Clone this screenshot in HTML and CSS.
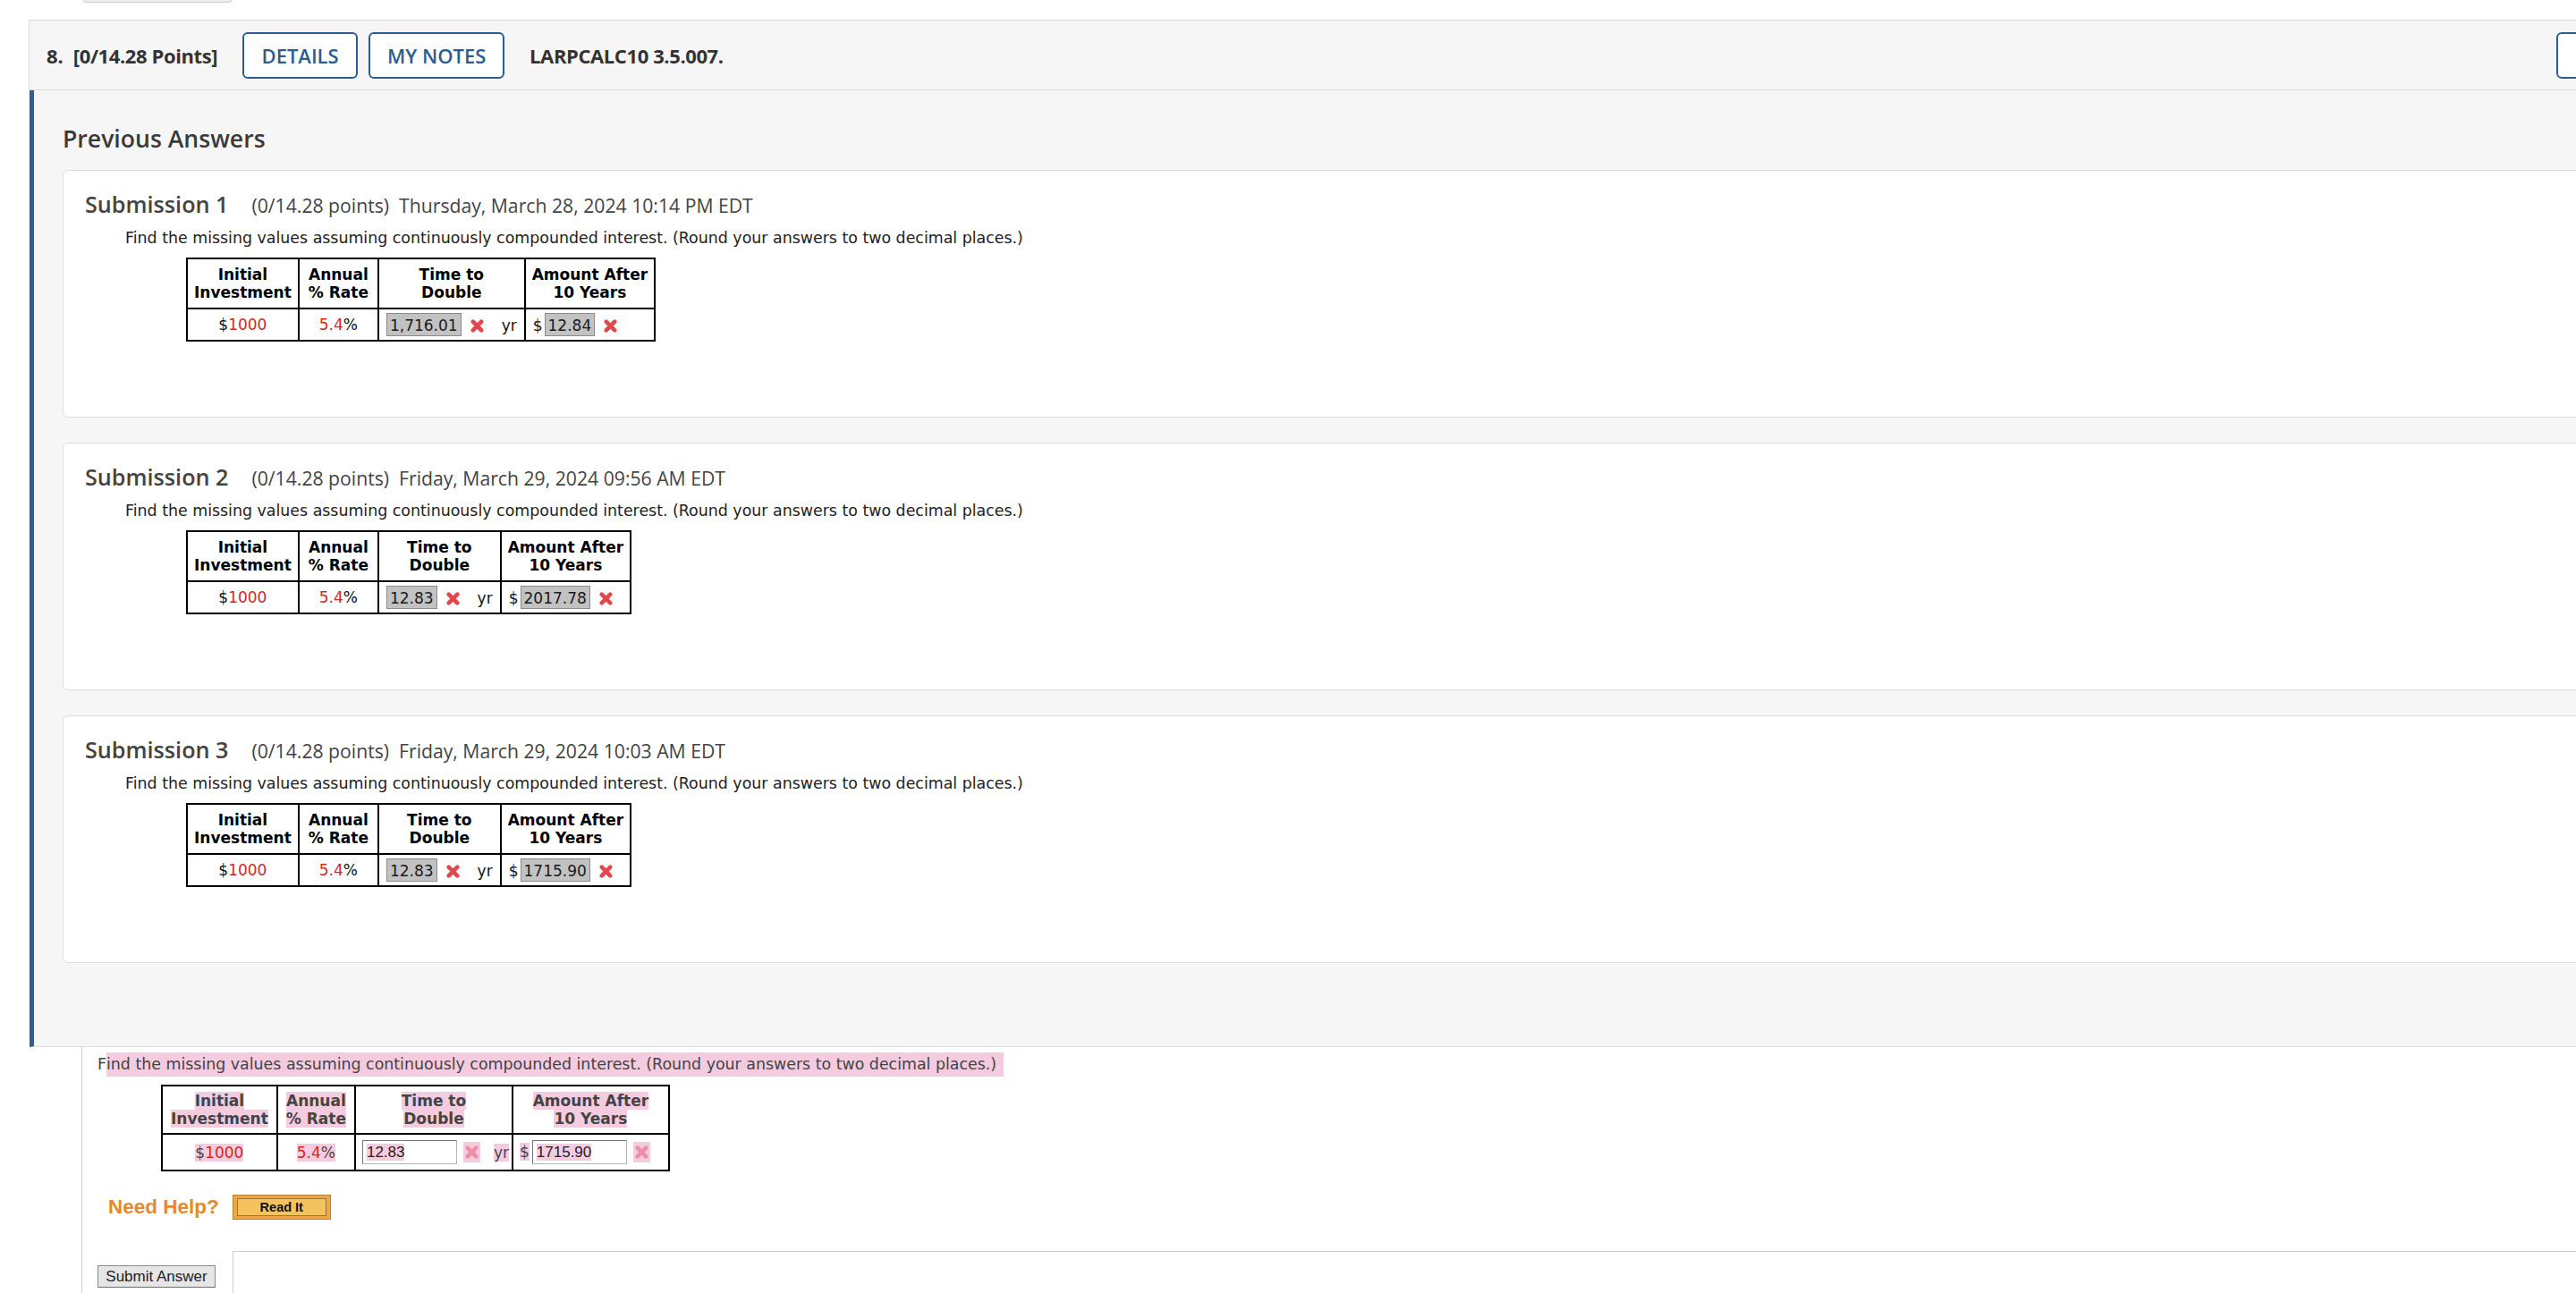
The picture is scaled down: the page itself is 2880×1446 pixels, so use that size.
FILE: index.html
```html
<!DOCTYPE html>
<html>
<head>
<meta charset="utf-8">
<title>Question 8</title>
<link rel="stylesheet" href="styles.css">
</head>
<body>
<div class="stub"></div>
<div class="question">
  <div class="qhead">
    <span class="qnum">8.</span>
    <span class="qpts">[0/14.28 Points]</span>
    <button class="qbtn qbtn-details">DETAILS</button>
    <button class="qbtn qbtn-notes">MY NOTES</button>
    <span class="qcode">LARPCALC10 3.5.007.</span>
    <button class="qbtn qbtn-right"></button>
  </div>

  <div class="prev">
    <h2 class="prev-title">Previous Answers</h2>

    <div class="card">
      <div class="sub-head"><span class="sub-name">Submission 1</span><span class="sub-pts">(0/14.28 points)</span><span class="sub-date">Thursday, March 28, 2024 10:14 PM EDT</span></div>
      <div class="qtext">Find the missing values assuming continuously compounded interest. (Round your answers to two decimal places.)</div>
      <table class="qtable">
        <tr>
          <th>Initial<br>Investment</th>
          <th class="rate">Annual<br>% Rate</th>
          <th>Time to<br>Double</th>
          <th>Amount After<br>10 Years</th>
        </tr>
        <tr>
          <td class="c">$<span class="red">1000</span></td>
          <td class="c"><span class="red">5.4</span>%</td>
          <td class="l"><span class="ans">1,716.01</span><svg class="xmark" viewBox="0 0 16 16"><path d="M3.5 3.5 L12.5 12.5 M12.5 3.5 L3.5 12.5"/></svg><span class="unit">yr</span></td>
          <td class="l">$<span class="ans ans-d">12.84</span><svg class="xmark" viewBox="0 0 16 16"><path d="M3.5 3.5 L12.5 12.5 M12.5 3.5 L3.5 12.5"/></svg></td>
        </tr>
      </table>
    </div>

    <div class="card">
      <div class="sub-head"><span class="sub-name">Submission 2</span><span class="sub-pts">(0/14.28 points)</span><span class="sub-date">Friday, March 29, 2024 09:56 AM EDT</span></div>
      <div class="qtext">Find the missing values assuming continuously compounded interest. (Round your answers to two decimal places.)</div>
      <table class="qtable">
        <tr>
          <th>Initial<br>Investment</th>
          <th class="rate">Annual<br>% Rate</th>
          <th>Time to<br>Double</th>
          <th>Amount After<br>10 Years</th>
        </tr>
        <tr>
          <td class="c">$<span class="red">1000</span></td>
          <td class="c"><span class="red">5.4</span>%</td>
          <td class="l"><span class="ans">12.83</span><svg class="xmark" viewBox="0 0 16 16"><path d="M3.5 3.5 L12.5 12.5 M12.5 3.5 L3.5 12.5"/></svg><span class="unit">yr</span></td>
          <td class="l">$<span class="ans ans-d">2017.78</span><svg class="xmark" viewBox="0 0 16 16"><path d="M3.5 3.5 L12.5 12.5 M12.5 3.5 L3.5 12.5"/></svg></td>
        </tr>
      </table>
    </div>

    <div class="card">
      <div class="sub-head"><span class="sub-name">Submission 3</span><span class="sub-pts">(0/14.28 points)</span><span class="sub-date">Friday, March 29, 2024 10:03 AM EDT</span></div>
      <div class="qtext">Find the missing values assuming continuously compounded interest. (Round your answers to two decimal places.)</div>
      <table class="qtable">
        <tr>
          <th>Initial<br>Investment</th>
          <th class="rate">Annual<br>% Rate</th>
          <th>Time to<br>Double</th>
          <th>Amount After<br>10 Years</th>
        </tr>
        <tr>
          <td class="c">$<span class="red">1000</span></td>
          <td class="c"><span class="red">5.4</span>%</td>
          <td class="l"><span class="ans">12.83</span><svg class="xmark" viewBox="0 0 16 16"><path d="M3.5 3.5 L12.5 12.5 M12.5 3.5 L3.5 12.5"/></svg><span class="unit">yr</span></td>
          <td class="l">$<span class="ans ans-d">1715.90</span><svg class="xmark" viewBox="0 0 16 16"><path d="M3.5 3.5 L12.5 12.5 M12.5 3.5 L3.5 12.5"/></svg></td>
        </tr>
      </table>
    </div>
  </div>

  <div class="current">
    <div class="qtext qtext-cur">F<span class="sel sel-line">ind the missing values assuming continuously compounded interest. (Round your answers to two decimal places.)</span></div>
    <table class="qtable cur-table">
      <tr>
        <th><span class="sel">Initial</span><br><span class="sel">Investment</span></th>
        <th><span class="sel">Annual</span><br><span class="sel">% Rate</span></th>
        <th><span class="sel">Time to</span><br><span class="sel">Double</span></th>
        <th><span class="sel">Amount After</span><br><span class="sel">10 Years</span></th>
      </tr>
      <tr>
        <td class="c"><span class="sel">$<span class="red">1000</span></span></td>
        <td class="c"><span class="sel"><span class="red">5.4</span>%</span></td>
        <td class="l cur-c3"><span class="inp"><span class="sel">12.83</span></span><span class="sel xwrap"><svg class="xmark xfaded" viewBox="0 0 16 16"><path d="M3.5 3.5 L12.5 12.5 M12.5 3.5 L3.5 12.5"/></svg></span><span class="sel unit-cur">yr</span></td>
        <td class="l cur-c4"><span class="sel">$</span><span class="inp inp-d"><span class="sel">1715.90</span></span><span class="sel xwrap"><svg class="xmark xfaded" viewBox="0 0 16 16"><path d="M3.5 3.5 L12.5 12.5 M12.5 3.5 L3.5 12.5"/></svg></span></td>
      </tr>
    </table>

    <div class="help-row">
      <span class="need-help">Need Help?</span>
      <span class="read-it"><span class="read-it-inner">Read It</span></span>
    </div>

    <div class="submit-row">
      <button class="submit-btn">Submit Answer</button>
      <div class="submit-box"></div>
    </div>
  </div>
</div>
</body>
</html>
```

FILE: styles.css
```css
html, body {
  margin: 0;
  padding: 0;
  overflow: hidden;
  background: #ffffff;
}

body {
  width: 2880px;
  height: 1446px;
  font-family: "Open Sans", sans-serif;
  color: #333333;
}

.stub {
  margin-left: 93px;
  width: 164px;
  height: 2px;
  background: #ececec;
  border: 1px solid #cfcfcf;
  border-top: none;
  border-radius: 0 0 4px 4px;
}

.question {
  margin-left: 32px;
  margin-top: 19px;
  width: 2980px;
}

/* header bar */
.qhead {
  display: flex;
  align-items: center;
  height: 77px;
  background: #f6f6f6;
  border: 1px solid #dcdcdc;
  padding: 0 23px 0 19px;
  font-size: 22px;
  font-weight: 700;
  color: #333333;
  white-space: nowrap;
}

.qnum {
  font-weight: 700;
}

.qpts {
  margin-left: 11px;
  font-weight: 700;
  letter-spacing: -0.4px;
}

.qbtn {
  font-family: "Open Sans", sans-serif;
  font-size: 22px;
  font-weight: 600;
  color: #2a5d94;
  background: #ffffff;
  border: 2px solid #2a5d94;
  border-radius: 6px;
  height: 52px;
  padding: 0;
  margin: 0;
  white-space: nowrap;
  text-align: center;
}

.qbtn-details {
  margin-left: 28px;
  width: 129px;
}

.qbtn-notes {
  margin-left: 12px;
  width: 152px;
}

.qcode {
  margin-left: 28px;
  font-weight: 700;
  letter-spacing: -0.4px;
}

.qbtn-right {
  margin-left: auto;
  width: 130px;
}

/* previous answers panel */
.prev {
  margin-left: 1px;
  background: #f6f6f6;
  border-left: 5px solid #2b5f97;
  border-bottom: 1px solid #dcdcdc;
  padding: 36px 0 93px 32px;
}

.prev-title {
  margin: 0 0 17px 0;
  font-size: 26.6px;
  font-weight: 600;
  color: #3a3a3a;
  line-height: normal;
}

.card {
  background: #ffffff;
  border: 1px solid #dedede;
  border-radius: 6px;
  padding: 20px 0 84px 24px;
  margin-bottom: 28px;
}

.card:last-child {
  margin-bottom: 0;
}

.sub-head {
  line-height: normal;
  color: #444444;
  white-space: nowrap;
}

.sub-name {
  font-size: 25.2px;
  font-weight: 600;
  color: #444444;
}

.sub-pts {
  margin-left: 26px;
  font-size: 21.2px;
}

.sub-date {
  margin-left: 11px;
  font-size: 21.2px;
}

.qtext {
  font-family: "DejaVu Sans", Verdana, sans-serif;
  font-size: 17.4px;
  line-height: 20px;
  color: #222222;
  margin: 11px 0 12px 45px;
  white-space: nowrap;
}

/* data tables */
.qtable {
  border-collapse: collapse;
  margin-left: 113px;
  font-family: "DejaVu Sans", Verdana, sans-serif;
  font-size: 17px;
  line-height: 20px;
  color: #111111;
}

.qtable th,
.qtable td {
  border: 2px solid #000000;
  white-space: nowrap;
}

.qtable th {
  font-weight: bold;
  text-align: center;
  padding: 7px 7px;
  color: #000000;
}

.qtable th.rate {
  padding-left: 10px;
  padding-right: 10px;
}

.qtable td {
  padding: 4px 8px;
}

.qtable td.c {
  text-align: center;
}

.qtable td.l {
  text-align: left;
}

.red {
  color: #d2281e;
}

.ans {
  display: inline-block;
  background: #c2c2c2;
  border: 1px solid #8a8a8a;
  padding: 3px 3px 1px 3px;
  line-height: 20px;
  color: #1a1a1a;
}

.ans-d {
  margin-left: 2px;
}

.xmark {
  display: inline-block;
  vertical-align: -3px;
  width: 17px;
  height: 17px;
  margin-left: 9px;
  fill: none;
  stroke: #e2474b;
  stroke-width: 4.4;
  stroke-linecap: round;
}

.unit {
  margin-left: 19px;
}

/* current question */
.current {
  margin-left: 59px;
  border-left: 1px solid #cccccc;
  padding: 6px 0 60px 17px;
}

.sel {
  background: #f5cbe0;
}

.qtext-cur {
  margin: 0;
  line-height: 27px;
  color: #444444;
}

.sel-line {
  display: inline-block;
  padding-right: 8px;
}

.cur-table {
  margin-top: 9px;
  margin-left: 71px;
  color: #444444;
}

.cur-table th {
  color: #444444;
  padding: 6px 9px;
}

.cur-table td {
  padding: 6px 7px;
}

.cur-table td.cur-c3 {
  padding-right: 3px;
}

.cur-table td.cur-c4 {
  padding-right: 20px;
}

.inp {
  display: inline-block;
  vertical-align: middle;
  box-sizing: border-box;
  width: 106px;
  height: 27px;
  background: #ffffff;
  border: 1px solid #b5b5b5;
  border-top-color: #767676;
  border-left-color: #767676;
  padding: 2px 4px;
  font-family: "Liberation Sans", Arial, sans-serif;
  font-size: 17px;
  line-height: 21px;
  color: #222222;
}

.inp-d {
  margin-left: 3px;
}

.xwrap {
  display: inline-block;
  vertical-align: middle;
  line-height: 0;
  padding: 3px 1px;
  margin-left: 7px;
}

.xwrap .xmark {
  margin-left: 0;
  vertical-align: top;
}

.xfaded {
  stroke: #ef8fa6;
}

.unit-cur {
  margin-left: 15px;
  vertical-align: middle;
}

.help-row {
  display: flex;
  align-items: center;
  margin-top: 26px;
  margin-left: 12px;
  height: 28px;
}

.need-help {
  font-family: "Liberation Sans", Arial, sans-serif;
  font-size: 22.5px;
  font-weight: bold;
  color: #e5892c;
}

.read-it {
  margin-left: 15px;
  display: inline-block;
  box-sizing: border-box;
  width: 110px;
  height: 28px;
  padding: 3px 4px;
  background: #efa743;
  border: 1px solid #b98234;
}

.read-it-inner {
  display: block;
  box-sizing: border-box;
  height: 20px;
  background: #f5c35d;
  border: 1px solid #9c7534;
  text-align: center;
  font-family: "Liberation Sans", Arial, sans-serif;
  font-size: 14.5px;
  font-weight: bold;
  line-height: 18px;
  color: #111111;
}

.submit-row {
  display: flex;
  align-items: flex-start;
  margin-top: 35px;
}

.submit-btn {
  margin-top: 16px;
  box-sizing: border-box;
  width: 132px;
  height: 25px;
  padding: 0;
  background: #e6e6e6;
  border: 1px solid #8a8a8a;
  border-bottom-color: #6e6e6e;
  font-family: "Liberation Sans", Arial, sans-serif;
  font-size: 17px;
  color: #222222;
}

.submit-box {
  margin-left: 19px;
  flex: 1;
  height: 120px;
  border-top: 1px solid #cccccc;
  border-left: 1px solid #cccccc;
}
```
